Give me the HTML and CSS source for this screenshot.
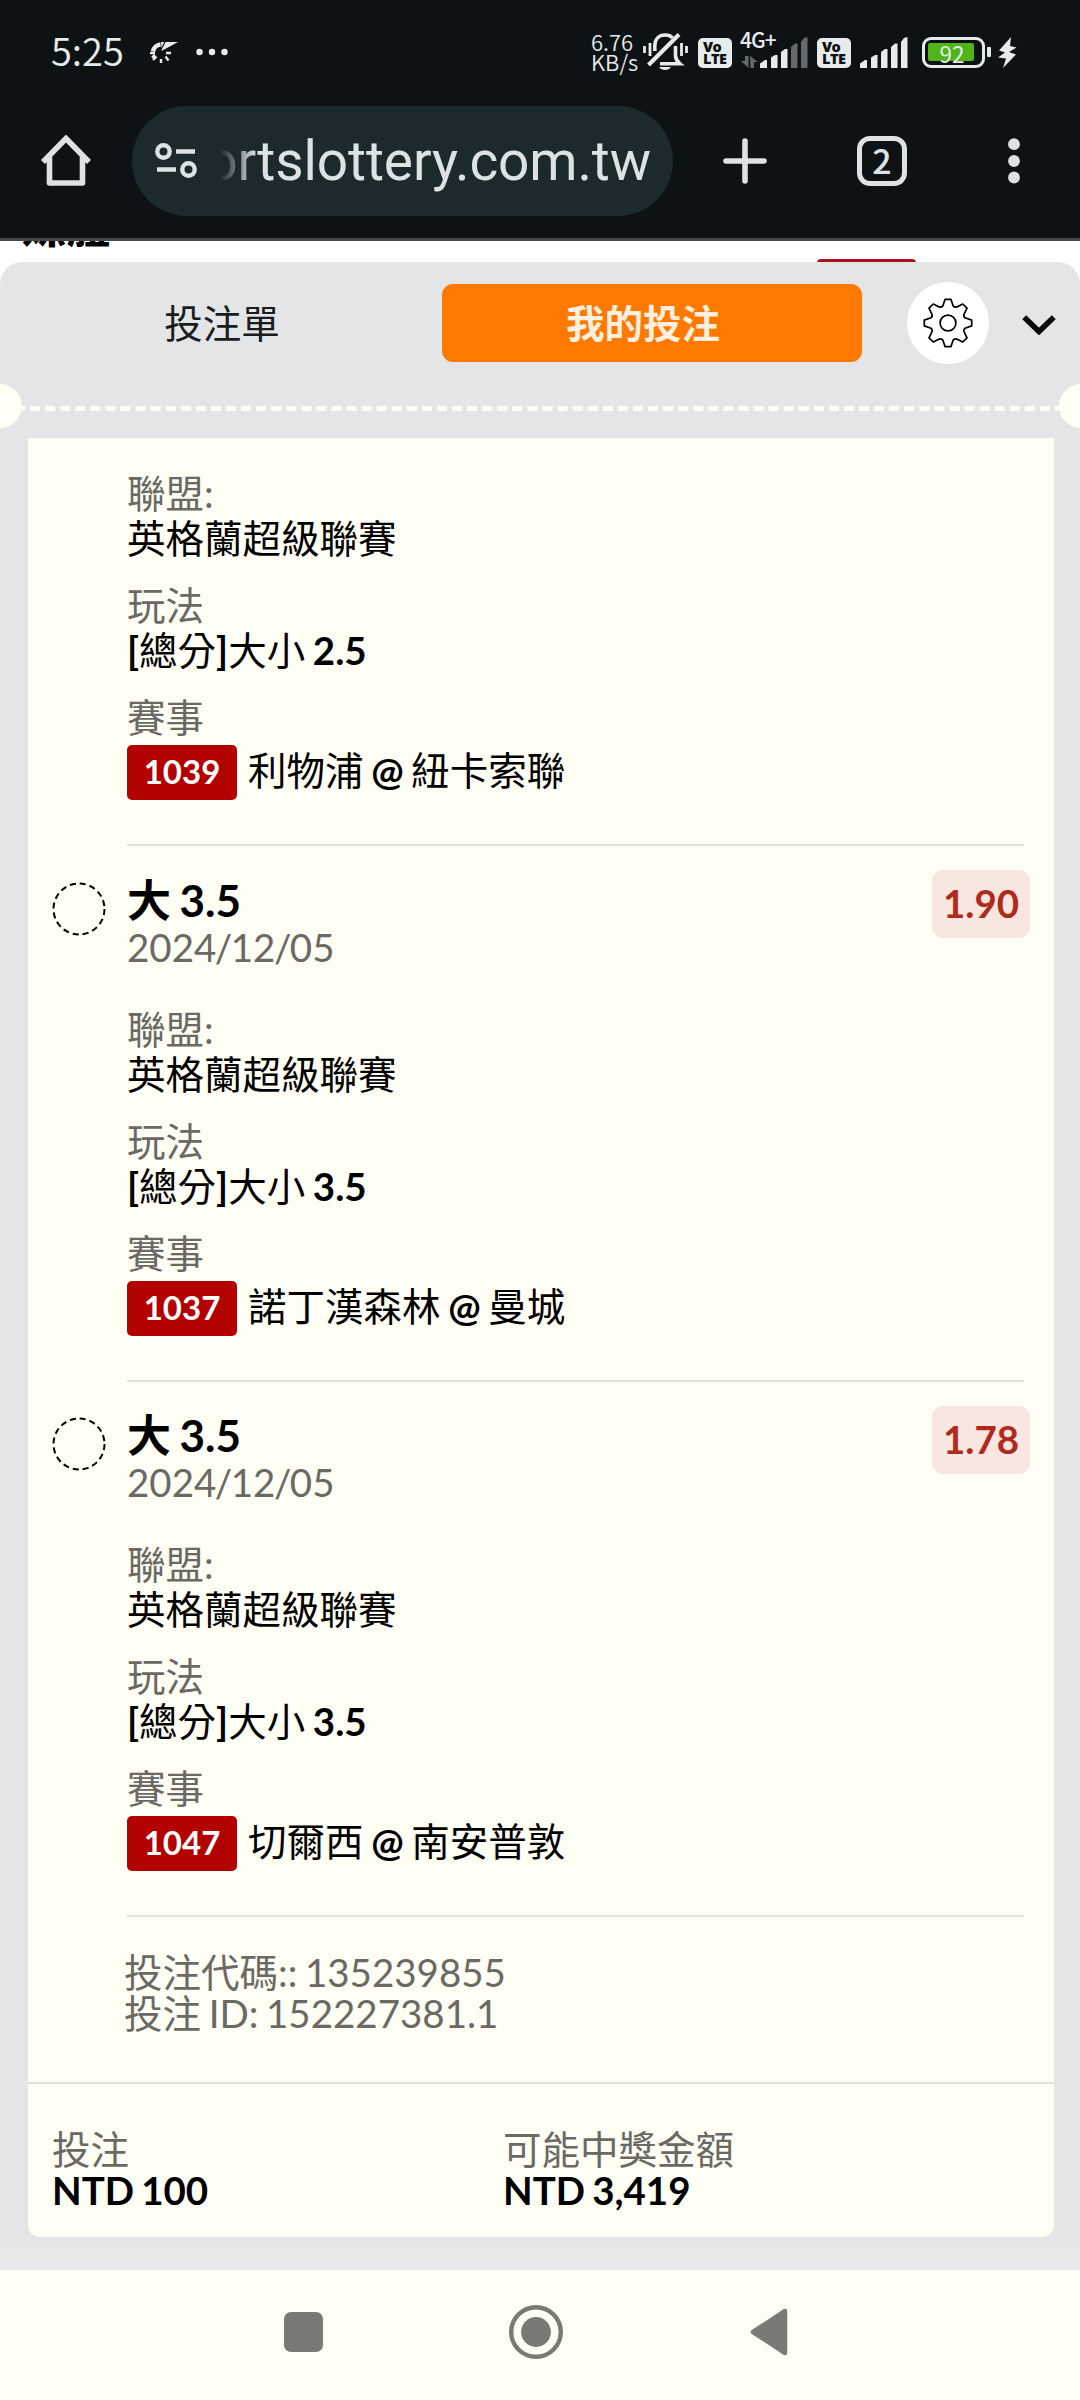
FILE: index.html
```html
<!DOCTYPE html>
<html lang="zh-Hant">
<head>
<meta charset="utf-8">
<title>我的投注</title>
<link rel="stylesheet" href="styles.css">
</head>
<body>
<div class="screen">
  <header class="chrome">
    <div class="status">
      <div class="status-left">
        <span class="clock">5:25</span>
        <svg class="bird" width="28" height="22" viewBox="0 0 28 22" fill="none" stroke="#e6ebeb">
          <path d="M3 9.500A8.500 8.500 0 0 1 10.500 2.500" stroke-width="4.500"/>
          <path d="M11 0H28L11.500 9Z" fill="#e6ebeb" stroke="none"/>
          <path d="M10.800 8L15 0" stroke="#0d1315" stroke-width="1.200"/>
          <path d="M0 11H5M3 18L6.500 14.500M11 21V17M18.500 18.500L15.500 14.500M21 11H16M2 15.500L5 13" stroke-width="2.400"/>
        </svg>
        <svg class="more" width="32" height="8" viewBox="0 0 32 8" fill="#e6ebeb"><circle cx="3.500" cy="4" r="3.200"/><circle cx="16" cy="4" r="3.200"/><circle cx="28.500" cy="4" r="3.200"/></svg>
      </div>
      <div class="status-right">
        <div class="rate"><span>6.76</span><span>KB/s</span></div>
        <svg class="bell" width="45" height="40" viewBox="0 0 45 40" fill="none" stroke="#e6ebeb" stroke-width="3.600">
          <path d="M11.800 19V14C11.800 7 16 3 22 3C25.500 3 28 4 29.500 5.800"/>
          <path d="M32.500 14V24Q32.800 28 37 31.800H17"/>
          <path d="M5.500 33L36 2.500" stroke-width="4"/>
          <path d="M1.500 14v7M7 11v13M38.500 11v13M43.500 14v7" stroke-width="2.800"/>
          <path d="M16 35H28Q26 38 22 38Q18 38 16 35Z" fill="#e6ebeb" stroke="none"/>
        </svg>
        <div class="volte volte-a"><span>Vo</span><span>LTE</span></div>
        <div class="network">
          <span class="network-type">4G+</span>
          <svg class="arrows" width="17" height="12" viewBox="0 0 17 12" fill="#64696b"><path d="M4 0H7.500V12L0 5H4ZM9 0L17 6H13V12H9.500Z"/></svg>
          <svg class="bars" width="48" height="34" viewBox="0 0 48 34" fill="#e6ebeb"><path d="M0 33V28.500L5 25H7V33ZM11 33V22.500L15 20H17.500V33ZM21 33V17L25 14H27.500V33Z"/><path d="M31 33V12L35 8.500H37.500V33ZM41 33V7L44 3L47.500 2V33Z" fill="#64696b"/></svg>
        </div>
        <div class="volte volte-b"><span>Vo</span><span>LTE</span></div>
        <svg class="bars-full" width="48" height="34" viewBox="0 0 48 34" fill="#e6ebeb"><path d="M0 33V28.500L5 25H7V33ZM11 33V22.500L15 20H17.500V33ZM21 33V17L25 14H27.500V33ZM31 33V12L35 8.500H37.500V33ZM41 33V7L44 3L47.500 2V33Z"/></svg>
        <div class="battery"><span class="charge">92</span></div>
        <span class="nub"></span>
        <svg width="19" height="31" viewBox="0 0 19 31" fill="#e6ebeb"><path d="M13 0L1 13.500L7 15.500L0 20.500L8 21.500L5 31L18 17.500L11 15L18.500 10.500L12 9Z"/></svg>
      </div>
    </div>
    <div class="toolbar">
      <svg class="home" width="50" height="52" viewBox="0 0 50 52" fill="none" stroke="#dde3e3" stroke-width="5.600" stroke-linejoin="round"><path d="M2 27L25 3.500L48 27" stroke-linejoin="miter"/><path d="M8.500 22V48H41.500V22"/></svg>
      <div class="address">
        <svg class="tune" width="42" height="36" viewBox="0 0 42 36" fill="none" stroke="#dde3e3" stroke-width="4.400"><circle cx="8.500" cy="8.500" r="6.200"/><circle cx="33.500" cy="26.500" r="6.200"/><path d="M21 8.500H40M2 26.500H21"/></svg>
        <div class="url"><span>ortslottery.com.tw</span></div>
      </div>
      <svg class="plus" width="44" height="46" viewBox="0 0 44 46" stroke="#dde3e3" stroke-width="5.600" stroke-linecap="round"><path d="M22 3V43M3 23H41"/></svg>
      <div class="tabs-count">2</div>
      <svg class="menu" width="14" height="46" viewBox="0 0 14 46" fill="#dde3e3"><circle cx="7" cy="6.200" r="5.900"/><circle cx="7" cy="23" r="5.900"/><circle cx="7" cy="39.500" r="5.900"/></svg>
    </div>
  </header>

  <div class="page-behind"><span class="page-title">媒體</span><span class="page-marker"></span></div>

  <main class="sheet">
    <div class="sheet-head">
      <div class="tab">投注單</div>
      <div class="tab tab-active">我的投注</div>
      <div class="settings">
        <svg width="50" height="50" viewBox="-25 -25 50 50" fill="none" stroke="#000" stroke-width="1.700" stroke-linejoin="round">
          <path d="M-2.900 -23.700H2.900L5.200 -17Q6.500 -15.300 8.800 -16.100L14.800 -19L19 -14.800L16.100 -8.800Q15.300 -6.500 17 -5.200L23.700 -2.900V2.900L17 5.200Q15.300 6.500 16.100 8.800L19 14.800L14.800 19L8.800 16.100Q6.500 15.300 5.200 17L2.900 23.700H-2.900L-5.200 17Q-6.500 15.300 -8.800 16.100L-14.800 19L-19 14.800L-16.100 8.800Q-15.300 6.500 -17 5.200L-23.700 2.900V-2.900L-17 -5.200Q-15.300 -6.500 -16.100 -8.800L-19 -14.800L-14.800 -19L-8.800 -16.100Q-6.500 -15.300 -5.200 -17Z"/>
          <circle r="7.900"/>
        </svg>
      </div>
      <svg class="chevron" width="34" height="20" viewBox="0 0 34 20" fill="none" stroke="#0a0a0a" stroke-width="5.600"><path d="M2.200 2.300L17 16.500L31.800 2.300"/></svg>
    </div>
    <div class="perforation"><i class="notch"></i><i class="dashes"></i><i class="notch"></i></div>

    <section class="card">
      <article class="leg leg-cut">
        <dl class="facts">
          <dt>聯盟:</dt><dd>英格蘭超級聯賽</dd>
          <dt>玩法</dt><dd><b>[</b>總分<b>]</b>大小 <b>2.5</b></dd>
          <dt>賽事</dt>
          <dd class="match"><span class="code">1039</span><span>利物浦 <b>@</b> 紐卡索聯</span></dd>
        </dl>
      </article>
      <article class="leg">
        <div class="leg-head">
          <svg class="pending" width="54" height="54" viewBox="0 0 54 54"><circle cx="27" cy="27" r="25.500"/></svg>
          <div class="pick"><h3>大 3.5</h3><time>2024<i>/</i>12<i>/</i>05</time></div>
          <span class="odds">1.90</span>
        </div>
        <dl class="facts">
          <dt>聯盟:</dt><dd>英格蘭超級聯賽</dd>
          <dt>玩法</dt><dd><b>[</b>總分<b>]</b>大小 <b>3.5</b></dd>
          <dt>賽事</dt>
          <dd class="match"><span class="code">1037</span><span>諾丁漢森林 <b>@</b> 曼城</span></dd>
        </dl>
      </article>
      <article class="leg">
        <div class="leg-head">
          <svg class="pending" width="54" height="54" viewBox="0 0 54 54"><circle cx="27" cy="27" r="25.500"/></svg>
          <div class="pick"><h3>大 3.5</h3><time>2024<i>/</i>12<i>/</i>05</time></div>
          <span class="odds">1.78</span>
        </div>
        <dl class="facts">
          <dt>聯盟:</dt><dd>英格蘭超級聯賽</dd>
          <dt>玩法</dt><dd><b>[</b>總分<b>]</b>大小 <b>3.5</b></dd>
          <dt>賽事</dt>
          <dd class="match"><span class="code">1047</span><span>切爾西 <b>@</b> 南安普敦</span></dd>
        </dl>
      </article>
      <div class="ids"><p>投注代碼:: 135239855</p><p>投注 ID: 152227381.1</p></div>
      <div class="totals">
        <div class="stake"><p>投注</p><b>NTD 100</b></div>
        <div><p>可能中獎金額</p><b>NTD 3,419</b></div>
      </div>
    </section>
  </main>

  <nav class="navbar">
    <i class="recent"></i>
    <svg class="home-key" width="54" height="54" viewBox="0 0 54 54"><circle cx="27" cy="27" r="24.800" fill="none" stroke="#7a7976" stroke-width="4.400"/><circle cx="27" cy="27" r="14.900" fill="#7a7976"/></svg>
    <svg width="38" height="48" viewBox="0 0 38 48"><path d="M3 24L35 3V45Z" fill="#7a7976" stroke="#7a7976" stroke-width="4.500" stroke-linejoin="round"/></svg>
  </nav>
</div>
</body>
</html>
```
FILE: styles.css
```css
* { box-sizing: border-box; margin: 0; padding: 0; }
svg { display: block; flex: none; }

body { width: 1080px; height: 2400px; overflow: hidden; background: #fffef5; }

.screen {
  display: flex;
  flex-direction: column;
  width: 1080px;
  height: 2400px;
  background: linear-gradient(#fff 300px, #fffef5 300px);
  font-family: Lato, "Noto Sans CJK TC", sans-serif;
  font-size: 38.5px;
  color: #000;
}

/* Browser and system bars */
.chrome {
  height: 241px;
  background: #0d1315;
  border-bottom: 3px solid #46494b;
  color: #e6ebeb;
  font-family: "Noto Sans CJK TC", sans-serif;
}
.status { display: flex; justify-content: space-between; height: 106px; padding: 0 63px 0 51px; }
.status-left, .status-right { display: flex; align-items: center; height: 104px; }
.clock { width: 99px; font-size: 38px; line-height: 40px; font-weight: 350; margin-top: -5px; }
.bird { margin-top: 2px; }
.more { margin-left: 18px; }

.rate { display: flex; flex-direction: column; width: 52px; font-size: 22px; line-height: 20px; font-weight: 350; margin-top: -2px; white-space: nowrap; }
.volte {
  display: flex;
  flex-direction: column;
  width: 34px;
  height: 30px;
  padding: 3px 0 0 5px;
  border-radius: 5px;
  background: #e6ebeb;
  color: #0d1315;
  font: 800 14.5px/12.500px "Open Sans", sans-serif;
  letter-spacing: -.5px;
}
.volte-a { margin: 1px 8px 0 10px; }
.volte-b { margin: 1px 9px 0 9px; }
.network {
  display: grid;
  grid-template: 17px 17px / 20px 48px;
  width: 68px;
  height: 34px;
}
.network-type { grid-area: 1 / 1; font-size: 21px; font-weight: 500; line-height: 15px; letter-spacing: -1px; white-space: nowrap; margin-top: -3px; }
.arrows { grid-area: 2 / 1; align-self: center; margin: 3px 0 0 1px; }
.bars { grid-area: 1 / 2 / 3 / 3; }
.battery {
  display: flex;
  width: 63px;
  height: 31px;
  margin-left: 14px;
  padding: 3px;
  border: 3.500px solid #e6ebeb;
  border-radius: 9px;
}
.charge { width: 46px; height: 18px; border-radius: 2px; background: #50b517; font-size: 22.500px; line-height: 21px; text-align: center; padding-left: 2px; }
.nub { width: 4px; height: 10px; margin: 0 7px 0 2px; border-radius: 1px; background: #e6ebeb; }

.toolbar { display: flex; align-items: center; height: 110px; padding-left: 41px; }
.address { display: flex; align-items: center; width: 541px; height: 110px; margin: 0 50px 0 41px; padding-left: 23px; border-radius: 55px; background: #1c2a2d; }
.url {
  display: flex;
  justify-content: flex-end;
  width: 431px;
  margin-left: 23px;
  overflow: hidden;
  color: #dde3e3;
  font: 400 55px/80px Roboto, sans-serif;
  letter-spacing: -.1px;
  white-space: nowrap;
  -webkit-mask-image: linear-gradient(90deg, transparent, #000 36px);
  mask-image: linear-gradient(90deg, transparent, #000 36px);
}
.tabs-count {
  width: 50px;
  height: 50px;
  margin: 0 100px 0 90px;
  border: 5.500px solid #dde3e3;
  border-radius: 13px;
  color: #dde3e3;
  font-size: 34px;
  font-weight: 500;
  line-height: 37px;
  text-align: center;
}

.page-behind { display: flex; justify-content: space-between; height: 21px; padding: 0 164px 0 22px; overflow: hidden; background: #fff; }
.page-title { height: 44px; margin-top: -37px; font-size: 44px; font-weight: 900; line-height: 44px; }
.page-marker { width: 99px; height: 8px; margin-top: 18px; border-radius: 4px; background: #a5141c; }

/* Bet sheet */
.sheet {
  height: 2008px;
  background: linear-gradient(#e4e5e7 1975px, #e9eaec 2008px);
  border-radius: 22px 22px 0 0;
  word-spacing: -2.2px;
}
.sheet-head { display: flex; align-items: center; height: 122px; padding-bottom: 1px; }
.tab { width: 442px; height: 78px; padding-left: 2px; color: #1a1c1d; line-height: 79px; text-align: center; }
.tab-active { width: 420px; padding: 0 18px 0 0; border-radius: 11px; background: #ff7900; color: #ffefdf; font-weight: 700; }
.settings { display: grid; place-items: center; width: 82px; height: 82px; margin: 0 33px 0 45px; border-radius: 50%; background: #fff; }
.chevron { margin-top: 4px; }

.perforation { display: flex; align-items: center; height: 44px; }
.notch { flex: none; width: 44px; height: 44px; margin-left: -22px; border-radius: 50%; background: #fffef5; }
.dashes { flex: none; width: 1050px; height: 5px; margin: 5px 16px 0 -7px; border-top: 5px dashed #fffef5; }
.dashes + .notch { margin: 0 0 0 -22px; }

.card { width: 1026px; height: 1799px; margin: 10px 0 0 28px; border-radius: 0 0 12px 12px; background: #fffef5; }
.leg { padding-top: 26.75px; height: 535.5px; }
.leg-cut { height: 408.750px; padding-top: 32.500px; }
.facts { width: 897px; margin-left: 99px; border-bottom: 2.750px solid #e4e1dc; padding-bottom: 44px; }
.facts dt { color: #6b6964; line-height: 45px; }
.facts dd { line-height: 45px; margin-bottom: 22px; }
.facts b, .totals b { font-weight: 700; }
.facts .match { display: flex; align-items: center; height: 55px; margin: 5px 0 0; line-height: 51px; }
.code { width: 110px; height: 55px; margin-right: 11px; border-radius: 5px; background: #b30000; color: #fff; font-size: 33px; font-weight: 700; line-height: 53px; text-align: center; }
.match span + span { height: 55px; }
.leg-head { display: flex; align-items: flex-start; height: 133px; padding: 0 24px; }
.pending { margin: 8px 22px 0 0; fill: none; stroke: #000; stroke-width: 2; stroke-dasharray: 6.100 3.910; }
.pick { flex: 1; margin-left: -1px; }
.pick h3 { height: 51px; font-size: 44px; font-weight: 700; line-height: 53px; }
.pick time { display: block; color: #6b6964; line-height: 44px; }
.pick i { font-style: normal; margin: 0 -1.500px; }
.odds { width: 98px; height: 68px; margin-top: -3.500px; border-radius: 11px; background: #f8e6e0; color: #b12a1e; font-weight: 700; line-height: 67px; text-align: center; }

.ids { height: 166px; padding: 34px 0 0 96px; border-bottom: 2.750px solid #e4e1dc; color: #6b6964; line-height: 41px; }
.totals { display: flex; padding: 45px 0 0 24px; line-height: 41px; }
.totals p { color: #6b6964; }
.totals b { display: block; }
.stake { width: 451px; }

.navbar { display: flex; align-items: center; height: 130px; padding: 0 0 6px 284px; background: #fffef5; }
.recent { width: 39px; height: 40px; border-radius: 7px; background: #7a7976; }
.home-key { margin: 0 187px 0 186px; }
```
